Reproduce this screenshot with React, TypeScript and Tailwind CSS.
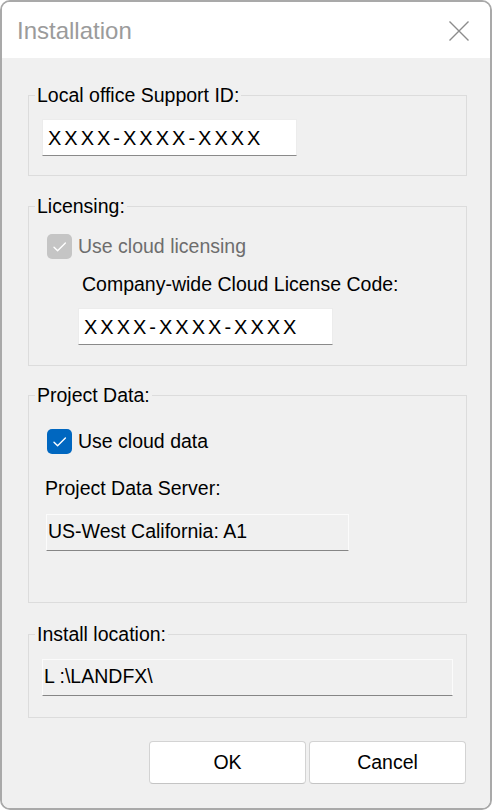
import React from 'react'

const FONT = { fontFamily: '"Liberation Sans", Arial, sans-serif' }

function Check({ disabled }: { disabled?: boolean }) {
  return (
    <span
      className={
        'grid h-[25px] w-[25px] shrink-0 place-items-center rounded-[5px] ' +
        (disabled ? 'bg-[#c5c5c5]' : 'bg-[#0067c0]')
      }
    >
      <svg width="25" height="25" viewBox="0 0 25 25" fill="none">
        <path d="M7 13.2l3.6 3.6L18.4 9" stroke="#fff" strokeWidth="1.4" strokeLinecap="round" strokeLinejoin="round" />
      </svg>
    </span>
  )
}

function Group({ title, className, children }: { title: string; className?: string; children: React.ReactNode }) {
  return (
    <fieldset className={'ml-[26px] w-[439px] border border-[#dcdcdc] pl-[6px] ' + (className ?? '')}>
      <legend className="px-[2px] text-[19.5px] leading-[22px] text-black">{title}</legend>
      {children}
    </fieldset>
  )
}

function CodeInput({ className }: { className?: string }) {
  return (
    <div
      className={
        'flex h-[37px] w-[255px] items-center border border-[#ececec] border-b-[#8a8a8a] bg-white pl-[5px] text-[20px] tracking-[3px] text-black ' +
        (className ?? '')
      }
    >
      XXXX-XXXX-XXXX
    </div>
  )
}

function ReadOnly({ value, className }: { value: string; className?: string }) {
  return (
    <div
      className={
        'flex h-[37px] items-center border border-[#fbfbfb] border-b-[#868686] bg-[#f0f0f0] pb-[2px] pl-[1px] text-[19.5px] text-black ' +
        (className ?? '')
      }
    >
      {value}
    </div>
  )
}

export default function App() {
  return (
    <div className="h-[810px] w-[492px] bg-white" style={FONT}>
      <div className="flex h-full w-full flex-col overflow-hidden rounded-[10px] border-2 border-[#a9a9a9]">
        <div className="flex h-[56px] shrink-0 items-center justify-between bg-white pl-[15px] pr-[20px] pt-[2px]">
          <span className="text-[24px] text-[#9b9b9b]">Installation</span>
          <svg width="22" height="22" viewBox="0 0 22 22" fill="none">
            <path d="M1.5 1.5l19 19M20.5 1.5l-19 19" stroke="#8c8c8c" strokeWidth="1.4" />
          </svg>
        </div>

        <div className="flex flex-1 flex-col bg-[#f0f0f0] pt-[26px]">
          <Group title="Local office Support ID:" className="pb-[19px]">
            <CodeInput className="ml-[7px] mt-[13px]" />
          </Group>

          <Group title="Licensing:" className="mt-[19px] pb-[20px]">
            <div className="ml-[12px] mt-[17px] flex items-center gap-[6px]">
              <Check disabled />
              <span className="text-[19.5px] leading-[25px] text-[#6d6d6d]">Use cloud licensing</span>
            </div>
            <div className="ml-[47px] mt-[14px] text-[19.5px] leading-[22px] text-black">Company-wide Cloud License Code:</div>
            <CodeInput className="ml-[43px] mt-[13px]" />
          </Group>

          <Group title="Project Data:" className="mt-[18px] pb-[51px]">
            <div className="ml-[12px] mt-[23px] flex items-center gap-[6px]">
              <Check />
              <span className="text-[19.5px] leading-[25px] text-black">Use cloud data</span>
            </div>
            <div className="ml-[10px] mt-[23px] text-[19.5px] leading-[22px] text-black">Project Data Server:</div>
            <ReadOnly value="US-West California: A1" className="ml-[11px] mt-[15px] w-[303px]" />
          </Group>

          <Group title="Install location:" className="mt-[20px] pb-[21px]">
            <ReadOnly value="L :\LANDFX\" className="ml-[7px] mt-[14px] w-[411px]" />
          </Group>

          <div className="mt-[23px] flex justify-end gap-[3px] pr-[24px]">
            <button className="h-[43px] w-[157px] rounded-[4px] border border-[#d3d3d3] border-b-[#c4c4c4] bg-white text-[19.5px] text-black">
              OK
            </button>
            <button className="h-[43px] w-[157px] rounded-[4px] border border-[#d3d3d3] border-b-[#c4c4c4] bg-white text-[19.5px] text-black">
              Cancel
            </button>
          </div>
        </div>
      </div>
    </div>
  )
}
